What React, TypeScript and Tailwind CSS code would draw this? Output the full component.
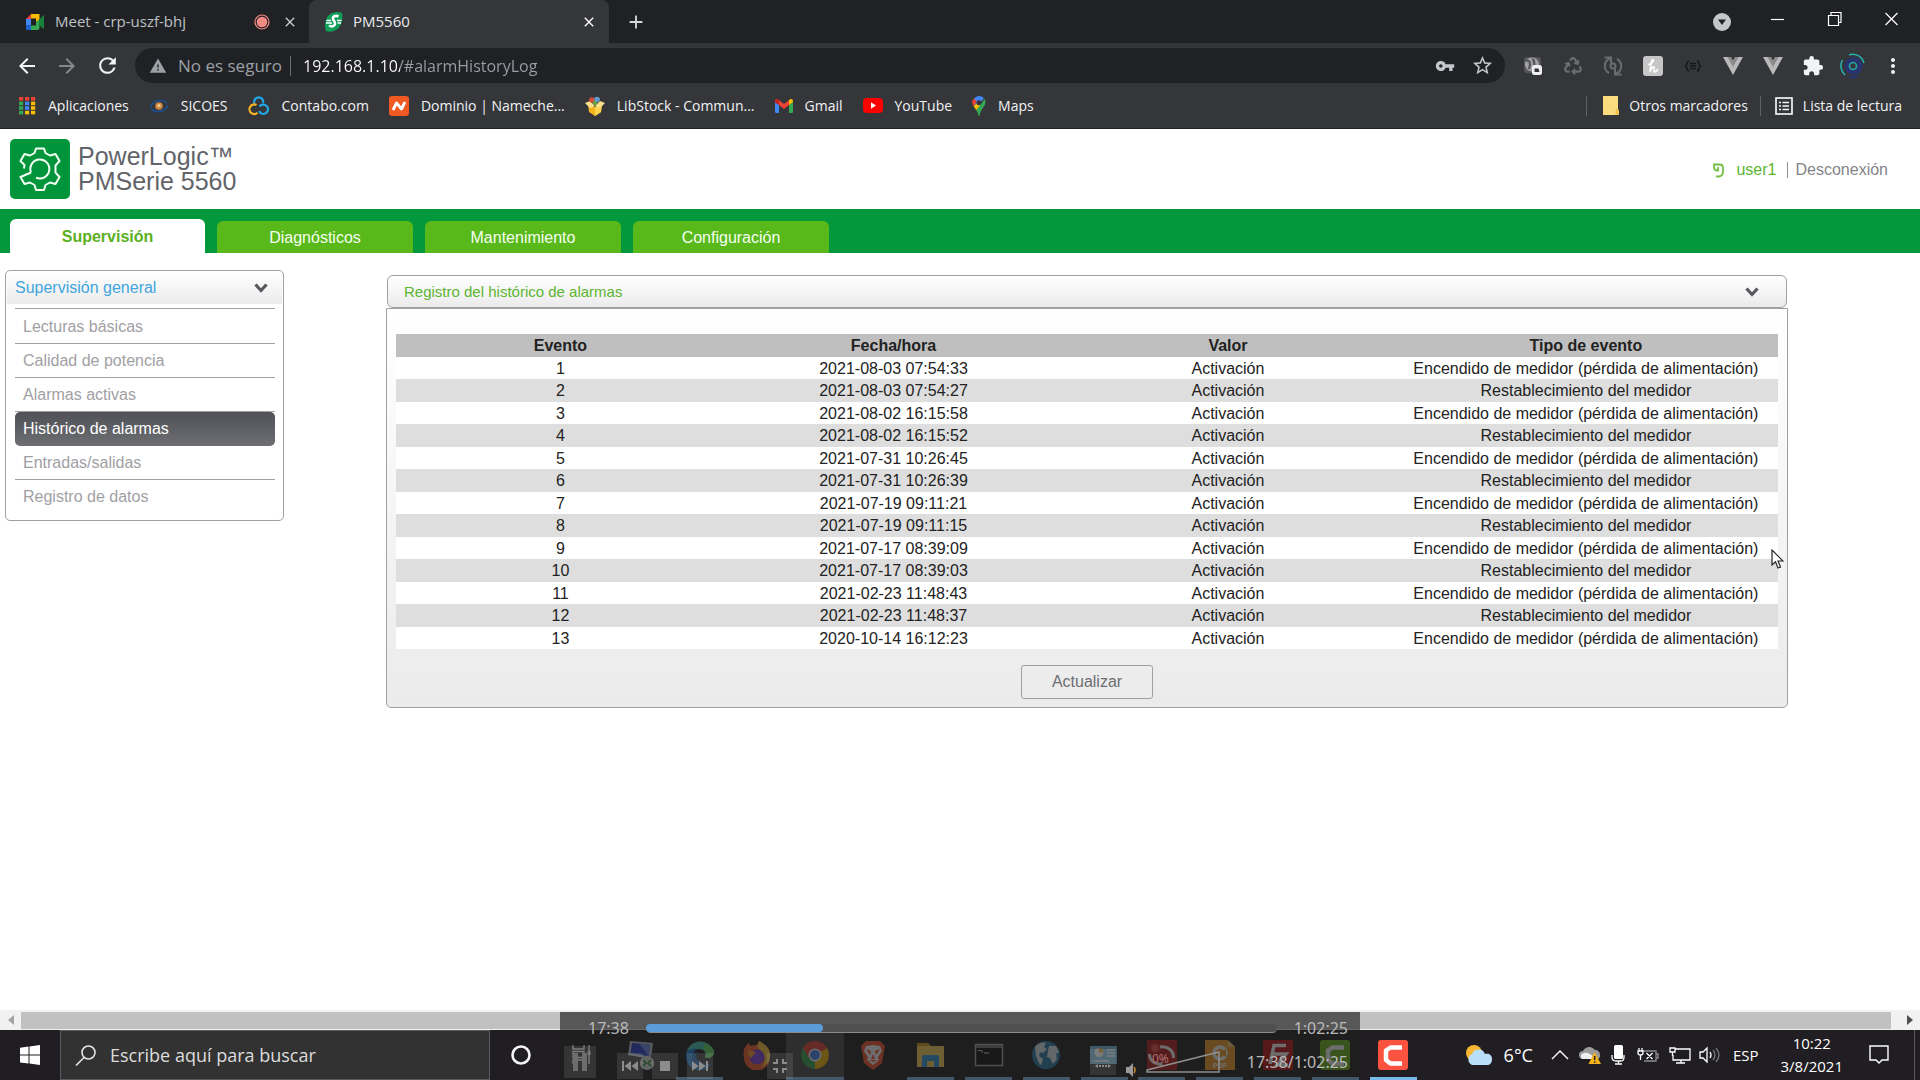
import React from 'react';
import { FaRecycle } from 'react-icons/fa';
import {
  MdWarning, MdVpnKey, MdStarBorder, MdRefresh, MdArrowBack, MdArrowForward, MdClose, MdAdd, MdMoreVert, MdExtension,
} from 'react-icons/md';

const ui = 'font-[Open_Sans,Noto_Sans,sans-serif]';

/* ---------- Browser icons ---------- */

const MeetIcon = () => (
  <svg viewBox="0 0 20 20" className="size-5">
    <path d="M1 7 6 2v5z" fill="#ea4335" />
    <path d="M6 2h8.500v5.500L11 10V6.500H6z" fill="#fbbc04" />
    <path d="M1 7h5v6.500H1z" fill="#4285f4" />
    <path d="M1 13.500h5V18H2.500A1.500 1.500 0 0 1 1 16.500z" fill="#1967d2" />
    <path d="M6 13.500h5V10l3.500-2.500V16a2 2 0 0 1-2 2H6z" fill="#34a853" />
    <path d="M14 8l4-4.500q1-.700 1 .500v12q0 1.200-1 .500L14 13z" fill="#188038" />
  </svg>
);

const RecordIcon = () => (
  <svg viewBox="0 0 16 16" className="size-4">
    <circle cx="8" cy="8" r="7" fill="none" stroke="#f28b82" strokeWidth="1.200" />
    <circle cx="8" cy="8" r="5.300" fill="#f28b82" />
  </svg>
);

const SchneiderIcon = () => (
  <svg viewBox="0 0 22 22" className="size-[22px]">
    <path d="M5 5C8 1 15 0 19 2c1 5 0 11-3 14.500S7 22 3 20C1 15 2 9 5 5z" fill="#0f9d58" />
    <path d="M15.500 5.500c-3-1.500-6 0-5.500 2.500.500 2 2.500 3 2 5-.500 2.500-3.500 3-6 1.500" fill="none" stroke="#fff" strokeWidth="2.600" />
    <path d="M3.500 9.500H8M3 12h6M14 9.500h4.500M14.500 12h3.500" stroke="#fff" strokeWidth="1.300" />
  </svg>
);

const AppsIcon = () => {
  const colors = ['#ea4335', '#ea4335', '#ea4335', '#34a853', '#4285f4', '#fbbc04', '#34a853', '#4285f4', '#fbbc04', '#34a853', '#fbbc04', '#fbbc04'];
  return (
    <svg viewBox="0 0 17 18" className="h-[18px] w-[17px]">
      {colors.map((c, i) => (
        <rect key={i} x={(i % 3) * 6} y={Math.floor(i / 3) * 4.6} width="4.200" height="3.600" fill={c} />
      ))}
    </svg>
  );
};

const SicoesIcon = () => (
  <svg viewBox="0 0 20 16" className="h-4 w-5">
    <path d="M1 9C4 3 12 0 18 5M19 7C17 13 8 16 2 11" fill="none" stroke="#1b4f8a" strokeWidth="1.800" />
    <circle cx="10" cy="8" r="3.800" fill="#c98544" />
    <circle cx="10" cy="7.500" r="1.600" fill="#f3cf8d" />
  </svg>
);

const ContaboIcon = () => (
  <svg viewBox="0 0 22 20" className="h-5 w-[22px]" fill="none" strokeWidth="2.200">
    <path d="M6.500 7.500a4.500 4.500 0 1 1 8.500-.500M11.500 10.500a4.700 4.700 0 1 1 4 7.500c-2 0-3.500-1-4.200-3" stroke="#22a7e6" />
    <path d="M9.500 16.800A4.800 4.800 0 1 1 8.500 9" stroke="#f5b324" />
  </svg>
);

const NamecheapIcon = () => (
  <svg viewBox="0 0 20 20" className="size-5">
    <rect width="20" height="20" rx="3" fill="#f05a22" />
    <path d="M4.500 13 7.500 7l5 6 3-6" fill="none" stroke="#fff" strokeWidth="2.800" strokeLinejoin="round" strokeLinecap="round" />
  </svg>
);

const LibstockIcon = () => (
  <svg viewBox="0 0 20 20" className="size-5">
    <path d="M3 8l7 3 7-3-1 8-6 4-6-4z" fill="#f4b41e" />
    <path d="M10 11v9l6-4 1-8z" fill="#fbd34d" />
    <path d="M0 7l5-2 5 5-5 2zM20 7l-5-2-5 5 5 2z" fill="#ffe08a" />
    <circle cx="7" cy="4" r="2.800" fill="#d84a3a" />
    <circle cx="12" cy="3.500" r="2.800" fill="#5d9bd0" />
    <circle cx="10" cy="7" r="2.300" fill="#65a748" />
  </svg>
);

const GmailIcon = () => (
  <svg viewBox="0 0 18 14" className="h-3.5 w-[18px]">
    <path d="M0 3l4 3v8H1.200A1.200 1.200 0 0 1 0 12.800z" fill="#4285f4" />
    <path d="M18 3l-4 3v8h2.800a1.200 1.200 0 0 0 1.200-1.200z" fill="#34a853" />
    <path d="M4 6 0 3V2C0 .200 2-.500 3.200.500L9 5l5.800-4.500v5L9 10z" fill="#ea4335" />
    <path d="M14 1.200l.800-.700C16-.500 18 .200 18 2v1l-4 3z" fill="#fbbc04" />
    <path d="M0 3V2C0 .200 2-.500 3.200.500L4 1.200V6z" fill="#c5221f" />
  </svg>
);

const YoutubeIcon = () => (
  <svg viewBox="0 0 20 15" className="h-[15px] w-5">
    <rect width="20" height="15" rx="4" fill="#f00" />
    <path d="M8 4.300v6.400l5-3.200z" fill="#fff" />
  </svg>
);

const MapsIcon = () => (
  <svg viewBox="0 0 14 20" className="h-5 w-3.5">
    <path d="M7 0a7 7 0 0 1 5 2.200L4.500 11 1 5A7 7 0 0 1 7 0z" fill="#4285f4" />
    <path d="M1.800 2.600 5 5.400 1.500 10C-.500 7 0 4.500 1.800 2.600z" fill="#ea4335" />
    <path d="M1.500 10 9 4.500l-.500 5-4.200 4.800z" fill="#fbbc04" />
    <path d="M12.600 3C16 9 8.500 12 7.500 20h-1c-.300-2.300-1.200-4-2.300-5.700z" fill="#34a853" />
    <circle cx="7" cy="6.800" r="2.500" fill="#35363a" />
  </svg>
);

const GreyGlobeExt = () => (
  <svg viewBox="0 0 20 20" className="size-5">
    <rect x="1" y="1" width="17" height="16" rx="3" fill="#55565a" />
    <circle cx="9" cy="8.500" r="7" fill="#a2a2a4" />
    <path d="M3 5c4-2 5 3 3 8M9 3c4 1 1 5 3 9" stroke="#55565a" strokeWidth="2.200" fill="none" />
    <rect x="9" y="9" width="10" height="10" rx="2.500" fill="#f1f1f1" />
    <path d="M11.500 12.500h4l1 3.500h-5z" fill="#35363a" />
  </svg>
);

const SyncExt = () => (
  <svg viewBox="0 0 22 22" className="size-[22px]" fill="none" stroke="#6b6c70" strokeWidth="2">
    <path d="M8 3.500A8 8 0 0 0 7 18M14 18.500A8 8 0 0 0 15 4" />
    <path d="M2.500 2.500H9V8M19.500 19.500H13V14" />
    <circle cx="11" cy="11" r="2.500" />
  </svg>
);

const HoneyExt = () => (
  <svg viewBox="0 0 22 22" className="size-[22px]">
    <rect x="1" y="1" width="20" height="20" rx="3" fill="#c6c6c6" />
    <path d="M6.500 9.500C10 9 12.500 5 11 4.500S8.500 11 8 17c1.500-4 3-5.500 4-5s-1 5 .500 5 2-1.200 3-2.500" fill="none" stroke="#fff" strokeWidth="1.600" strokeLinecap="round" />
  </svg>
);

const BracesExt = () => (
  <svg viewBox="0 0 18 14" className="h-3.5 w-[18px]" fill="none" stroke="#17181a" strokeWidth="1.500">
    <path d="M5 2C2 2 4 7 1 7c3 0 1 5 4 5M13 2c3 0 1 5 4 5-3 0-1 5-4 5M6 4.500h6M6 7h6M6 9.500h6" />
  </svg>
);

const VueExt = () => (
  <svg viewBox="0 0 20 18" className="h-[18px] w-5">
    <path d="M0 0h6l4 7 4-7h6L10 18z" fill="#b9b9b9" />
    <path d="M4.500 0H8l2 3.500L12 0h3.500L10 10z" fill="#8b8b8b" />
  </svg>
);

const AvatarIcon = () => (
  <svg viewBox="0 0 26 26" className="size-[26px]" fill="none">
    <circle cx="13.500" cy="13" r="6.500" stroke="#27346f" strokeWidth="5" />
    <circle cx="13" cy="13" r="3.500" stroke="#23a9a8" strokeWidth="1.600" />
    <path d="M9 1.700A12 12 0 0 1 24 10M2.500 7A12 12 0 0 0 5 22" stroke="#26b5b5" strokeWidth="1.500" />
    <path d="M18 23A12 12 0 0 1 9 24" stroke="#27346f" strokeWidth="2" />
  </svg>
);

/* ---------- Browser chrome ---------- */

type Bookmark = { label: string; icon: React.ReactNode };

const bookmarks: Bookmark[] = [
  { label: 'Aplicaciones', icon: <AppsIcon /> },
  { label: 'SICOES', icon: <SicoesIcon /> },
  { label: 'Contabo.com', icon: <ContaboIcon /> },
  { label: 'Dominio | Nameche...', icon: <NamecheapIcon /> },
  { label: 'LibStock - Commun...', icon: <LibstockIcon /> },
  { label: 'Gmail', icon: <GmailIcon /> },
  { label: 'YouTube', icon: <YoutubeIcon /> },
  { label: 'Maps', icon: <MapsIcon /> },
];

function TabStrip() {
  return (
    <div className={`flex h-[43px] items-stretch bg-[#202124] text-[15px] ${ui}`}>
      <div className="flex w-[309px] items-center pr-[11px] pl-[25px] text-[#bdc1c6]">
        <MeetIcon />
        <span className="ml-2.5 flex-1">Meet - crp-uszf-bhj</span>
        <RecordIcon />
        <button aria-label="Cerrar pestaña Meet" className="ml-3 text-[#c8cbcf]"><MdClose size={16} /></button>
      </div>
      <div className="flex w-[300px] items-center rounded-t-lg bg-[#35363a] pr-3 pl-3.5 text-[#e8eaed]">
        <SchneiderIcon />
        <span className="ml-2 flex-1">PM5560</span>
        <button aria-label="Cerrar pestaña PM5560" className="text-white"><MdClose size={16} /></button>
      </div>
      <button aria-label="Nueva pestaña" className="ml-4 text-[#d5d7da]"><MdAdd size={22} /></button>
      <div className="ml-auto flex items-center text-white">
        <button aria-label="Buscar pestañas" className="mr-[18px]">
          <svg viewBox="0 0 18 18" className="size-[18px]">
            <circle cx="9" cy="9" r="9" fill="#c5c6ca" />
            <path d="M5 6.500h8L9 12z" fill="#202124" />
          </svg>
        </button>
        {[
          { name: 'Minimizar', d: 'M1 8.500h13' },
          { name: 'Restaurar', d: 'M1.500 4.500h10v10h-10zM4 4V1.500h10v10h-2' },
          { name: 'Cerrar', d: 'M1.500 2 13.500 14M13.500 2 1.500 14' },
        ].map((b) => (
          <button key={b.name} aria-label={b.name} className="flex h-[38px] w-[57px] items-center justify-center self-start">
            <svg viewBox="0 0 15 16" className="h-4 w-[15px]" fill="none" stroke="#fff" strokeWidth="1.200"><path d={b.d} /></svg>
          </button>
        ))}
      </div>
    </div>
  );
}

function Toolbar() {
  const extensions = [
    { name: 'Traductor', icon: <GreyGlobeExt /> },
    { name: 'Reciclaje', icon: <FaRecycle size={18} color="#6b6c70" /> },
    { name: 'Sincronizar', icon: <SyncExt /> },
    { name: 'Honey', icon: <HoneyExt /> },
    { name: 'JSON', icon: <BracesExt /> },
    { name: 'Vue 2', icon: <VueExt /> },
    { name: 'Vue 3', icon: <VueExt /> },
    { name: 'Extensiones', icon: <MdExtension size={22} color="#f1f3f4" /> },
    { name: 'Perfil', icon: <AvatarIcon /> },
    { name: 'Menú', icon: <MdMoreVert size={24} color="#f1f3f4" /> },
  ];
  return (
    <div className={`flex h-11 items-center bg-[#35363a] pt-px pr-[7px] pl-[15px] ${ui}`}>
      <button aria-label="Atrás" className="w-10 text-[#f1f3f4]"><MdArrowBack size={24} /></button>
      <button aria-label="Adelante" className="w-10 text-[#85878b]"><MdArrowForward size={24} /></button>
      <button aria-label="Recargar" className="w-10 text-[#f1f3f4]"><MdRefresh size={25} /></button>
      <div className="flex h-[35px] flex-1 items-center rounded-full bg-[#202124] pr-[11px] pl-3.5 text-base text-[#9aa0a6]">
        <MdWarning size={18} />
        <button className="ml-[11px] text-[17px]">No es seguro</button>
        <span className="mr-3 ml-2 h-5 w-px bg-[#6b6e72]" />
        <input
          aria-label="Dirección"
          defaultValue="192.168.1.10/#alarmHistoryLog"
          className="min-w-0 flex-1 bg-[linear-gradient(90deg,#fff_97px,#9aa0a6_97px)] bg-clip-text text-transparent outline-none"
        />
        <button aria-label="Contraseñas" className="mr-4 text-[#c4c7cb]"><MdVpnKey size={20} /></button>
        <button aria-label="Añadir a favoritos" className="text-[#c4c7cb]"><MdStarBorder size={23} /></button>
      </div>
      <div className="ml-2 flex">
        {extensions.map((e) => (
          <button key={e.name} aria-label={e.name} className="flex w-10 items-center justify-center">{e.icon}</button>
        ))}
      </div>
    </div>
  );
}

function BookmarksBar() {
  return (
    <nav aria-label="Marcadores" className={`flex h-[42px] items-center border-b border-[#202124] bg-[#35363a] pr-[18px] pb-1 pl-[19px] text-sm text-[#f1f3f4] ${ui}`}>
      <div className="flex flex-1 items-center gap-5">
        {bookmarks.map((b) => (
          <a key={b.label} href="#" className="flex items-center gap-3 whitespace-nowrap">{b.icon}{b.label}</a>
        ))}
      </div>
      <span className="h-5 w-px bg-[#5f6368]" />
      <button className="mx-3 flex items-center gap-2.5 pl-1">
        <svg viewBox="0 0 16 19" className="h-[19px] w-4">
          <path d="M0 0h15v14h1v5H0z" fill="#fbdc7e" />
          <path d="M12.500 19v-4q0-2 1.750-2T16 15v4z" fill="#f0c14f" />
        </svg>
        Otros marcadores
      </button>
      <span className="h-5 w-px bg-[#5f6368]" />
      <button className="ml-3.5 flex items-center gap-2.5">
        <svg viewBox="0 0 18 18" className="size-[18px]" fill="none" stroke="#f1f3f4" strokeWidth="1.700">
          <rect x="1" y="1" width="16" height="16" />
          <path d="M4 5.500h2M7.500 5.500H14M4 9h2M7.500 9H14M4 12.500h2M7.500 12.500H14" />
        </svg>
        Lista de lectura
      </button>
    </nav>
  );
}

/* ---------- Web page ---------- */

const Chevron = () => (
  <svg viewBox="0 0 14 10" className="h-2.5 w-3.5" fill="none" stroke="#55585c" strokeWidth="3.200">
    <path d="M1.500 1.500 7 7.500l5.500-6" />
  </svg>
);

function PageHeader() {
  return (
    <header className="flex h-20 items-center pr-8 pl-2.5">
      <svg viewBox="0 0 60 60" className="size-[60px]">
        <rect width="60" height="60" rx="5" fill="#00953b" />
        <g fill="none" stroke="#f4fff4" strokeWidth="2" strokeLinejoin="round">
          <path d="M21 33.500 10.500 38l4 7 5.500-1.500 4.500 2.500 1.500 5h8l1.500-5 4.500-2.500 5.500 1.500 4-7-4-4.500v-7l4-4.500-4-7-5.500 1.500-4.500-2.500L34 9.500h-8L24.500 14 20 16.500 14.500 15l-4 7 4 4-.500 3.500" />
          <path d="M21 33.500a9.500 9.500 0 1 1 5 5.200" />
        </g>
      </svg>
      <h1 className="ml-2 text-[25px] leading-[25px] text-[#626469]">PowerLogic™<br />PMSerie 5560</h1>
      <div className="ml-auto flex items-center pt-0.5">
        <svg viewBox="0 0 11 15" className="mr-3 h-[15px] w-[11px]" fill="none" stroke="#72bf44" strokeWidth="1.800">
          <path d="M5 4v3.500H3.500Q1 7 1 4V1.500h5.500Q10 1.500 10 5v3q0 5.500-4.500 5.500H3" />
        </svg>
        <a href="#" className="text-[#5cb531]">user1</a>
        <span className="mr-2 ml-2.5 h-4 w-px bg-[#8d8f93]" />
        <a href="#" className="text-[#838589]">Desconexión</a>
      </div>
    </header>
  );
}

function MainTabs() {
  return (
    <nav aria-label="Secciones" className="flex h-11 items-end gap-3 bg-[#02983b] px-2.5">
      <a href="#" aria-current="page" className="flex h-[34px] w-[195px] items-center justify-center rounded-t-md bg-white pt-0.5 font-bold text-[#5cb022]">Supervisión</a>
      {['Diagnósticos', 'Mantenimiento', 'Configuración'].map((t) => (
        <a key={t} href="#" className="flex h-8 w-[196px] items-center justify-center rounded-t-md bg-[#59b91b] pt-0.5 text-[#f6fff0]">{t}</a>
      ))}
    </nav>
  );
}

function Sidebar() {
  const items = ['Lecturas básicas', 'Calidad de potencia', 'Alarmas activas', 'Histórico de alarmas', 'Entradas/salidas', 'Registro de datos'];
  const active = 3;
  return (
    <aside className="h-fit w-[279px] shrink-0 rounded-[5px] border border-[#9fa0a4] px-px pt-px pb-[7px]">
      <button className="flex h-8 w-full items-center justify-between bg-linear-to-b from-white to-[#ebebeb] pr-3.5 pl-2 text-[#42a6dd]">
        Supervisión general
        <Chevron />
      </button>
      <ul className="mt-1 mr-[7px] ml-2">
        {items.map((item, i) => (
          <li key={item} className={`${i === active + 1 ? '' : 'border-t border-[#9fa0a4]'} ${i === 0 ? 'pt-px' : ''}`}>
            <a
              href="#"
              className={
                i === active
                  ? 'flex h-[34px] items-center rounded-[5px] bg-linear-to-b from-[#4f5157] to-[#6d6f73] px-2 text-white'
                  : 'flex h-[33px] items-center px-2 text-[#9fa0a4]'
              }
            >
              {item}
            </a>
          </li>
        ))}
      </ul>
    </aside>
  );
}

const timestamps = [
  '2021-08-03 07:54:33', '2021-08-03 07:54:27', '2021-08-02 16:15:58', '2021-08-02 16:15:52',
  '2021-07-31 10:26:45', '2021-07-31 10:26:39', '2021-07-19 09:11:21', '2021-07-19 09:11:15',
  '2021-07-17 08:39:09', '2021-07-17 08:39:03', '2021-02-23 11:48:43', '2021-02-23 11:48:37',
  '2020-10-14 16:12:23',
];

function AlarmPanel() {
  return (
    <section className="min-w-0 flex-1">
      <div className="mx-px flex h-[33px] items-center justify-between rounded-md border border-[#9fa0a4] bg-linear-to-b from-white to-[#ebebeb] pt-px pr-[27px] pl-4">
        <h2 className="text-[15px] text-[#5cb531]">Registro del histórico de alarmas</h2>
        <button aria-label="Contraer panel"><Chevron /></button>
      </div>
      <div className="flex flex-col items-center rounded-b-[5px] border border-[#9fa0a4] bg-linear-to-b from-white to-[#ebebeb] px-[9px] pt-[25px] pb-2">
        <table className="w-full table-fixed border-collapse text-center text-base leading-[22px] text-[#222]">
          <colgroup>
            <col className="w-[23.8%]" /><col className="w-[24.4%]" /><col className="w-[24%]" /><col className="w-[27.8%]" />
          </colgroup>
          <thead>
            <tr className="h-[23px] bg-[#bfbfbf]">
              {['Evento', 'Fecha/hora', 'Valor', 'Tipo de evento'].map((h) => <th key={h} className="p-0">{h}</th>)}
            </tr>
          </thead>
          <tbody>
            {timestamps.map((t, i) => (
              <tr key={t} className="h-[22px] bg-white odd:leading-5 even:h-[23px] even:bg-[#dedede] odd:[&>td]:pt-0.5">
                <td className="p-0">{i + 1}</td>
                <td className="p-0">{t}</td>
                <td className="p-0">Activación</td>
                <td className="p-0">{i % 2 === 0 ? 'Encendido de medidor (pérdida de alimentación)' : 'Restablecimiento del medidor'}</td>
              </tr>
            ))}
          </tbody>
        </table>
        <button className="mt-4 h-[34px] rounded-[3px] border border-[#9fa0a4] px-[30px] text-base text-[#6c6e72]">Actualizar</button>
      </div>
    </section>
  );
}

function ScrollBar() {
  return (
    <div className="flex h-5 items-center bg-[#f1f1f1]">
      <span className="flex w-[21px] justify-center"><svg viewBox="0 0 6 10" className="h-2.5 w-1.5"><path d="M6 0v10L0 5z" fill="#a3a3a3" /></svg></span>
      <span className="h-[17px] flex-1 bg-[#c1c1c1]" />
      <span className="flex w-[29px] justify-center pl-2"><svg viewBox="0 0 6 10" className="h-2.5 w-1.5"><path d="M0 0v10l6-5z" fill="#505050" /></svg></span>
    </div>
  );
}

/* ---------- Taskbar ---------- */

const S = ({ children, className = 'size-[30px]' }: { children: React.ReactNode; className?: string }) => (
  <svg viewBox="0 0 30 30" className={className}>{children}</svg>
);

const apps: { name: string; open?: boolean; current?: boolean; lit?: boolean; icon: React.ReactNode }[] = [
  { name: 'Cortana', icon: <S><circle cx="15" cy="15" r="8.500" fill="none" stroke="#f4f4f4" strokeWidth="2.600" /></S> },
  {
    name: 'Vista de tareas',
    icon: <S><path d="M6 5v4h11V5M6 24v-4h11v4M6 11.500h11v6H6zM22 5v19" fill="none" stroke="#fff" strokeWidth="1.400" /><rect x="20.500" y="11" width="3" height="4" fill="#fff" /></S>,
  },
  {
    name: 'Escritorio remoto',
    icon: (
      <S>
        <path d="M3 1 26 3l-2 16L1 15z" fill="#bfc7d6" />
        <path d="M5 3 23 4.500 21.500 16 3.500 13z" fill="#2440cf" /><path d="M12 3.500 23 4.500 21.500 16z" fill="#6d86ee" />
        <circle cx="20" cy="23" r="7" fill="#e2e2e2" /><path d="M16 20l3 3-3 3M24 20l-3 3 3 3" stroke="#2c9a35" strokeWidth="1.600" fill="none" />
      </S>
    ),
  },
  {
    name: 'Edge', open: true,
    icon: (
      <S>
        <path d="M1 14A14.500 14.500 0 0 1 29 11c1 7-8 8-9 6 2-4-1-8-6-8C7 9 2 12 1 14z" fill="#40c9b4" />
        <path d="M20 3c7 3 10 8 9 11-1 4-8 5-9 3 2-3 1-6-2-8z" fill="#65d968" />
        <path d="M1 14c1-5 7-6 11-5-4 2-6 9-2 14s11 4 16 1c-3 5-9 6-13 6C5 29 0 22 1 14z" fill="#1a7fdc" />
        <path d="M12 12c-3 7 3 13 14 12-5 5-14 6-18 1-3-5-1-11 4-13z" fill="#1255a8" />
      </S>
    ),
  },
  {
    name: 'Firefox',
    icon: (
      <S>
        <path d="M2 9c2-3 3-4 4-6l3 3c2-1 4-1 6-1l2-4c7 4 12 8 11 16a13 13 0 0 1-26 1c-1-4 0-7 0-9z" fill="#ff5a2c" />
        <path d="M17 1c7 4 12 8 11 16-1 6-5 9-9 10 6-6 5-13-3-19-1-2 0-5 1-7z" fill="#ffc83a" />
        <circle cx="15" cy="17" r="7.500" fill="#7b3fe0" />
        <path d="M6 10c4 0 5 2 8 2-1 3-4 3-4 6-3-1-5-4-4-8z" fill="#ff9a2e" />
      </S>
    ),
  },
  {
    name: 'Chrome', open: true, current: true,
    icon: (
      <S>
        <path d="M15 15 2.900 8A14 14 0 0 1 27.100 8z" fill="#ea4335" /><path d="M15 15 27.100 8A14 14 0 0 1 15 29z" fill="#fbbc04" /><path d="M15 15v14A14 14 0 0 1 2.900 8z" fill="#34a853" />
        <path d="M15 8h12.100A14 14 0 0 0 2.900 8L9 18z" fill="#ea4335" />
        <circle cx="15" cy="15" r="6.500" fill="#fff" /><circle cx="15" cy="15" r="5" fill="#4285f4" />
      </S>
    ),
  },
  {
    name: 'Brave',
    icon: (
      <S>
        <path d="M8 1h14l5 5-1 5-2 12-9 7-9-7L4 11 3 6z" fill="#fb542b" />
        <path d="M15 5l7 1 2 5-4 6 1 3-6 5-6-5 1-3-4-6 2-5z" fill="#fff" />
        <path d="M8 9l5 2-1 4zM22 9l-5 2 1 4zM15 14l2 5h-4zM11 20l4 2 4-2" fill="#fb542b" />
      </S>
    ),
  },
  {
    name: 'Explorador', open: true,
    icon: <S><path d="M1 3h11l3 3h13v21H1z" fill="#ffd45c" /><path d="M1 3h11l2 3H1z" fill="#d89a1c" /><path d="M6 27V17q0-2 2-2h13q2 0 2 2v10h-5v-6h-7v6z" fill="#2f97e0" /></S>,
  },
  {
    name: 'Símbolo del sistema', open: true,
    icon: <S><rect x="1.500" y="4.500" width="27" height="21" fill="#0d0d0d" stroke="#a8a8a8" strokeWidth="1.500" /><path d="M2 5h26v3H2z" fill="#777" /><path d="M4 10.500h3M8 10v3M10 13h5" stroke="#ddd" /></S>,
  },
  {
    name: 'Globo', open: true,
    icon: <S><circle cx="15" cy="15" r="14" fill="#2c7fae" /><path d="M4 7c4-5 8-5 11-4l-2 4 3 2-4 4-3-1-1 4 4 3-2 6c-3-2-3-6-5-9zM18 6l7 0 3 6-3 2 1 5-4 5-3-6-3-1 1-6z" fill="#e6edef" /></S>,
  },
  {
    name: 'Panel', open: true,
    icon: <S><rect x="1" y="6" width="27" height="18" fill="#79c4ec" /><circle cx="10" cy="12.500" r="4.500" fill="#fff" /><path d="M10 12.500V8a4.500 4.500 0 0 1 4.500 4.500z" fill="#f1a52c" /><path d="M18 10h8M18 13h8M18 16h8M4 21h16" stroke="#fff" strokeWidth="1.500" /></S>,
  },
  {
    name: 'Grabación', open: true,
    icon: <S><rect width="30" height="30" fill="#b71c1c" /><circle cx="8" cy="8" r="4" fill="#ee4a4a" /><path d="M2.500 14c0 7 6 11 13 10M13 7c8-1 14 4 13.500 11" stroke="#fff" strokeWidth="3" fill="none" /></S>,
  },
  {
    name: 'Foxit PDF', open: true,
    icon: (
      <S>
        <path d="M0 0h22l8 7v23H0z" fill="#f59a23" /><path d="M23 0l7 7h-7z" fill="#ffcc80" />
        <circle cx="15" cy="13" r="6" fill="none" stroke="#fff" strokeWidth="3.500" /><path d="M15 13l6-4v8z" fill="#f59a23" />
        <text x="15" y="28" textAnchor="middle" fontSize="7" fontWeight="700" fill="#fff" fontFamily="Liberation Sans">PDF</text>
      </S>
    ),
  },
  {
    name: 'FileZilla', open: true,
    icon: <S><rect width="30" height="30" fill="#bf1010" /><path d="M7 24 11 5.500h12M9 14h14L14 25h11" stroke="#fff" strokeWidth="3.500" fill="none" /></S>,
  },
  {
    name: 'Camtasia', open: true,
    icon: <S><rect width="30" height="30" rx="3" fill="#6cb61a" /><path d="M24 7.500H12.500L8 10.500V20l4.500 3.500H24" stroke="#fff" strokeWidth="4.500" fill="none" strokeLinejoin="round" /></S>,
  },
  {
    name: 'Grabadora Camtasia', open: true, lit: true,
    icon: <S><rect width="30" height="30" rx="3" fill="#fb5340" /><path d="M24 7.500H12.500L8 10.500V20l4.500 3.500H24" stroke="#fff" strokeWidth="4.500" fill="none" strokeLinejoin="round" /></S>,
  },
];

function Tray() {
  return (
    <div className="ml-auto flex items-center text-white">
      <svg viewBox="0 0 28 22" className="h-[22px] w-7">
        <circle cx="9" cy="9" r="8" fill="#f7b733" />
        <path d="M7 21a6 6 0 0 1 0-11 7 7 0 0 1 13 0c4-1 7 1 7 5s-2 6-5 6z" fill="#b8def8" />
      </svg>
      <span className="mr-[18px] ml-[11px] text-lg">6°C</span>
      <svg viewBox="0 0 18 10" className="mr-2.5 h-2.5 w-[18px]" fill="none" stroke="#fff" strokeWidth="1.400"><path d="M1 9l8-8 8 8" /></svg>
      <svg viewBox="0 0 22 18" className="mr-2.5 h-[18px] w-[22px]">
        <path d="M4 13a4 4 0 0 1 0-8 7 7 0 0 1 12-1c3 0 5 2 5 5s-1 4-3 4z" fill="#9b9b9b" />
        <path d="M3 13a3.500 3.500 0 0 1 2-6c3-1 6 0 12 6z" fill="#eee" />
        <path d="M15.500 6 22 18H9.500z" fill="#f5b21a" /><path d="M15.700 10v4M15.700 15.200v1.500" stroke="#222" strokeWidth="1.500" />
      </svg>
      <svg viewBox="0 0 14 20" className="mr-3 h-5 w-3.5"><rect x="3" y="0" width="9" height="14" rx="1.500" fill="#fff" /><path d="M1 10v2q0 4 4 4h5q3 0 3-4v-2M7.500 16v3M4 19h7" fill="none" stroke="#fff" strokeWidth="1.300" /></svg>
      <svg viewBox="0 0 22 16" className="mr-2.5 h-4 w-[22px]" fill="none" strokeWidth="1.300">
        <path d="M6 4h13v10H7M19 7h2v4h-2" stroke="#8d8d8d" /><path d="M2 1v3M5 1v3M1 4h5v2q0 2-2.500 2T1 6zM3.500 8v5M9.500 6l6 6M15.500 6l-6 6" stroke="#fff" />
      </svg>
      <svg viewBox="0 0 22 17" className="mr-2 h-[17px] w-[22px]" fill="none" stroke="#fff" strokeWidth="1.300"><path d="M6 2h15v11H4V8M12 13v3M7 16h9M1 1h5v4H1zM3.500 5v4" /></svg>
      <svg viewBox="0 0 22 18" className="mr-3 h-[18px] w-[22px]" fill="none" strokeWidth="1.300">
        <path d="M1 6h3l4-4v14l-4-4H1zM11 6q2 3 0 6" stroke="#fff" /><path d="M14 4q4 5 0 10M17 2q6 7 0 14" stroke="#777" />
      </svg>
      <span className="text-[15px]">ESP</span>
      <span className="ml-[22px] text-center text-[15px] leading-[23px]">10:22<br />3/8/2021</span>
      <svg viewBox="0 0 20 20" className="ml-[26px] size-5" fill="none" stroke="#fff" strokeWidth="1.400"><path d="M1 1h18v14h-6l-3 3-3-3H1z" /></svg>
      <span className="ml-[25px] h-[50px] w-1.5 border-l border-[#5a5a5e]" />
    </div>
  );
}

function Taskbar() {
  return (
    <footer className={`flex h-[50px] bg-[#201e22] ${ui}`}>
      <button aria-label="Inicio" className="flex w-[60px] items-center justify-center">
        <svg viewBox="0 0 20 20" className="size-5" fill="#fff"><path d="M0 2.800 8.500 1.600v8H0zM9.500 1.500 20 0v9.600H9.500zM0 10.600h8.500v8L0 17.400zM9.500 10.600H20V20L9.500 18.600z" /></svg>
      </button>
      <label className="flex w-[430px] items-center gap-3.5 border border-[#5b5b5d] bg-[#323232] pl-3.5">
        <svg viewBox="0 0 21 21" className="size-[21px]" fill="none" stroke="#e6e6e6" strokeWidth="1.600"><circle cx="13.500" cy="7.500" r="6.500" /><path d="M9 12.500 1 20.500" /></svg>
        <input aria-label="Buscar" placeholder="Escribe aquí para buscar" className="min-w-0 flex-1 text-lg outline-none placeholder:text-[#dcdcdc]" />
      </label>
      <div className="grid w-[932px] grid-cols-[61px_62px_repeat(14,1fr)]">
        {apps.map((a) => (
          <button key={a.name} aria-label={a.name} className={`flex flex-col items-center justify-between pt-2.5 ${a.current ? 'bg-[#4a4a4d]' : ''}`}>
            {a.icon}
            <span className={a.open ? `h-[3px] ${a.current ? 'w-full' : 'w-[47px]'} ${a.lit ? 'bg-[#76b9ed]' : 'bg-[#83c3f5]'}` : ''} />
          </button>
        ))}
      </div>
      <Tray />
    </footer>
  );
}

function PlayerButton({ name, d, className }: { name: string; d: string; className?: string }) {
  return (
    <button aria-label={name} className={`flex size-[26px] items-center justify-center bg-white/10 ${className ?? ''}`}>
      <svg viewBox="0 0 16 16" className="size-4" fill="#8c8c8c"><path d={d} /></svg>
    </button>
  );
}

function PlayerOverlay() {
  return (
    <div className="absolute bottom-0 left-1/2 flex h-[68px] w-[800px] -translate-x-1/2 flex-col bg-[#1e1e1e]/65 font-[Noto_Sans,sans-serif] text-base text-[#b9b9b9]">
      <div className="flex h-8 items-center gap-[17px] pr-3 pl-7">
        <span>17:38</span>
        <div role="progressbar" aria-label="Progreso" aria-valuenow={28} className="flex h-[9px] flex-1 rounded-[5px] border-b border-[#8a8a8a] bg-[#505050]">
          <span className="h-2 w-[28%] rounded-[4px] bg-[#5a9bd8]" />
        </div>
        <span>1:02:25</span>
      </div>
      <div className="flex h-9 items-center pr-3 pl-1">
        <button aria-label="Pausa" className="flex size-8 items-center justify-center bg-white/10">
          <svg viewBox="0 0 16 18" className="h-[18px] w-4" fill="#6d6d6d"><path d="M1 0h5v18H1zM10 0h5v18h-5z" /></svg>
        </button>
        <PlayerButton name="Anterior" className="mt-2 ml-[21px]" d="M0 3h2v10H0zM9 3v10L2.500 8zM16 3v10L9.500 8z" />
        <PlayerButton name="Detener" className="mt-2 ml-[9px]" d="M3 3h10v10H3z" />
        <PlayerButton name="Siguiente" className="mt-2 ml-[9px]" d="M14 3h2v10h-2zM7 3v10l6.500-5zM0 3v10l6.500-5z" />
        <PlayerButton name="Salir de pantalla completa" className="mt-2 ml-[54px]" d="M4 1h2v5H1V4h3zM10 1h2v3h3v2h-5zM1 10h5v5H4v-3H1zM10 10h5v2h-3v3h-2z" />
        <PlayerButton name="Lista" className="ml-[297px]" d="M0 12l3-2v4zM16 12l-3-2v4zM4 11h2v2H4zM7 11h2v2H7zM10 11h2v2h-2z" />
        <svg viewBox="0 0 10 14" className="mt-4 ml-2.5 h-3.5 w-2.5"><path d="M0 4h3l4-4v14L3 10H0z" fill="#9a9a9a" /><path d="M8 4q2 3 0 6" stroke="#c98a2c" strokeWidth="1.500" fill="none" /></svg>
        <div className="relative ml-2.5 h-[22px] w-[74px]">
          <svg viewBox="0 0 74 22" className="h-[22px] w-[74px]" fill="none" stroke="#8f8f8f" strokeWidth="1.500"><path d="M1 19 73 1v20H1z" /></svg>
          <span className="absolute top-0 left-1.5 text-xs leading-4 text-[#b07070]">0%</span>
        </div>
        <span className="ml-auto">17:38/1:02:25</span>
      </div>
    </div>
  );
}

export default function App() {
  return (
    <div className="relative flex min-h-screen flex-col bg-white">
      <TabStrip />
      <Toolbar />
      <BookmarksBar />
      <div className="flex flex-1 flex-col font-[Liberation_Sans,Arial,sans-serif] text-base">
        <PageHeader />
        <MainTabs />
        <main className="flex flex-1 gap-[102px] pr-[132px] pl-[5px]">
          <div className="flex pt-[17px]"><Sidebar /></div>
          <div className="flex min-w-0 flex-1 pt-[22px]"><AlarmPanel /></div>
        </main>
      </div>
      <ScrollBar />
      <Taskbar />
      <PlayerOverlay />
      <svg viewBox="0 0 13 20" className="absolute top-[549px] left-[1771px] h-5 w-[13px]">
        <path d="M1 1v15l3.500-3.200L7 19l2.500-1-2.500-6h5z" fill="#fff" stroke="#222" strokeWidth="1.200" />
      </svg>
    </div>
  );
}
